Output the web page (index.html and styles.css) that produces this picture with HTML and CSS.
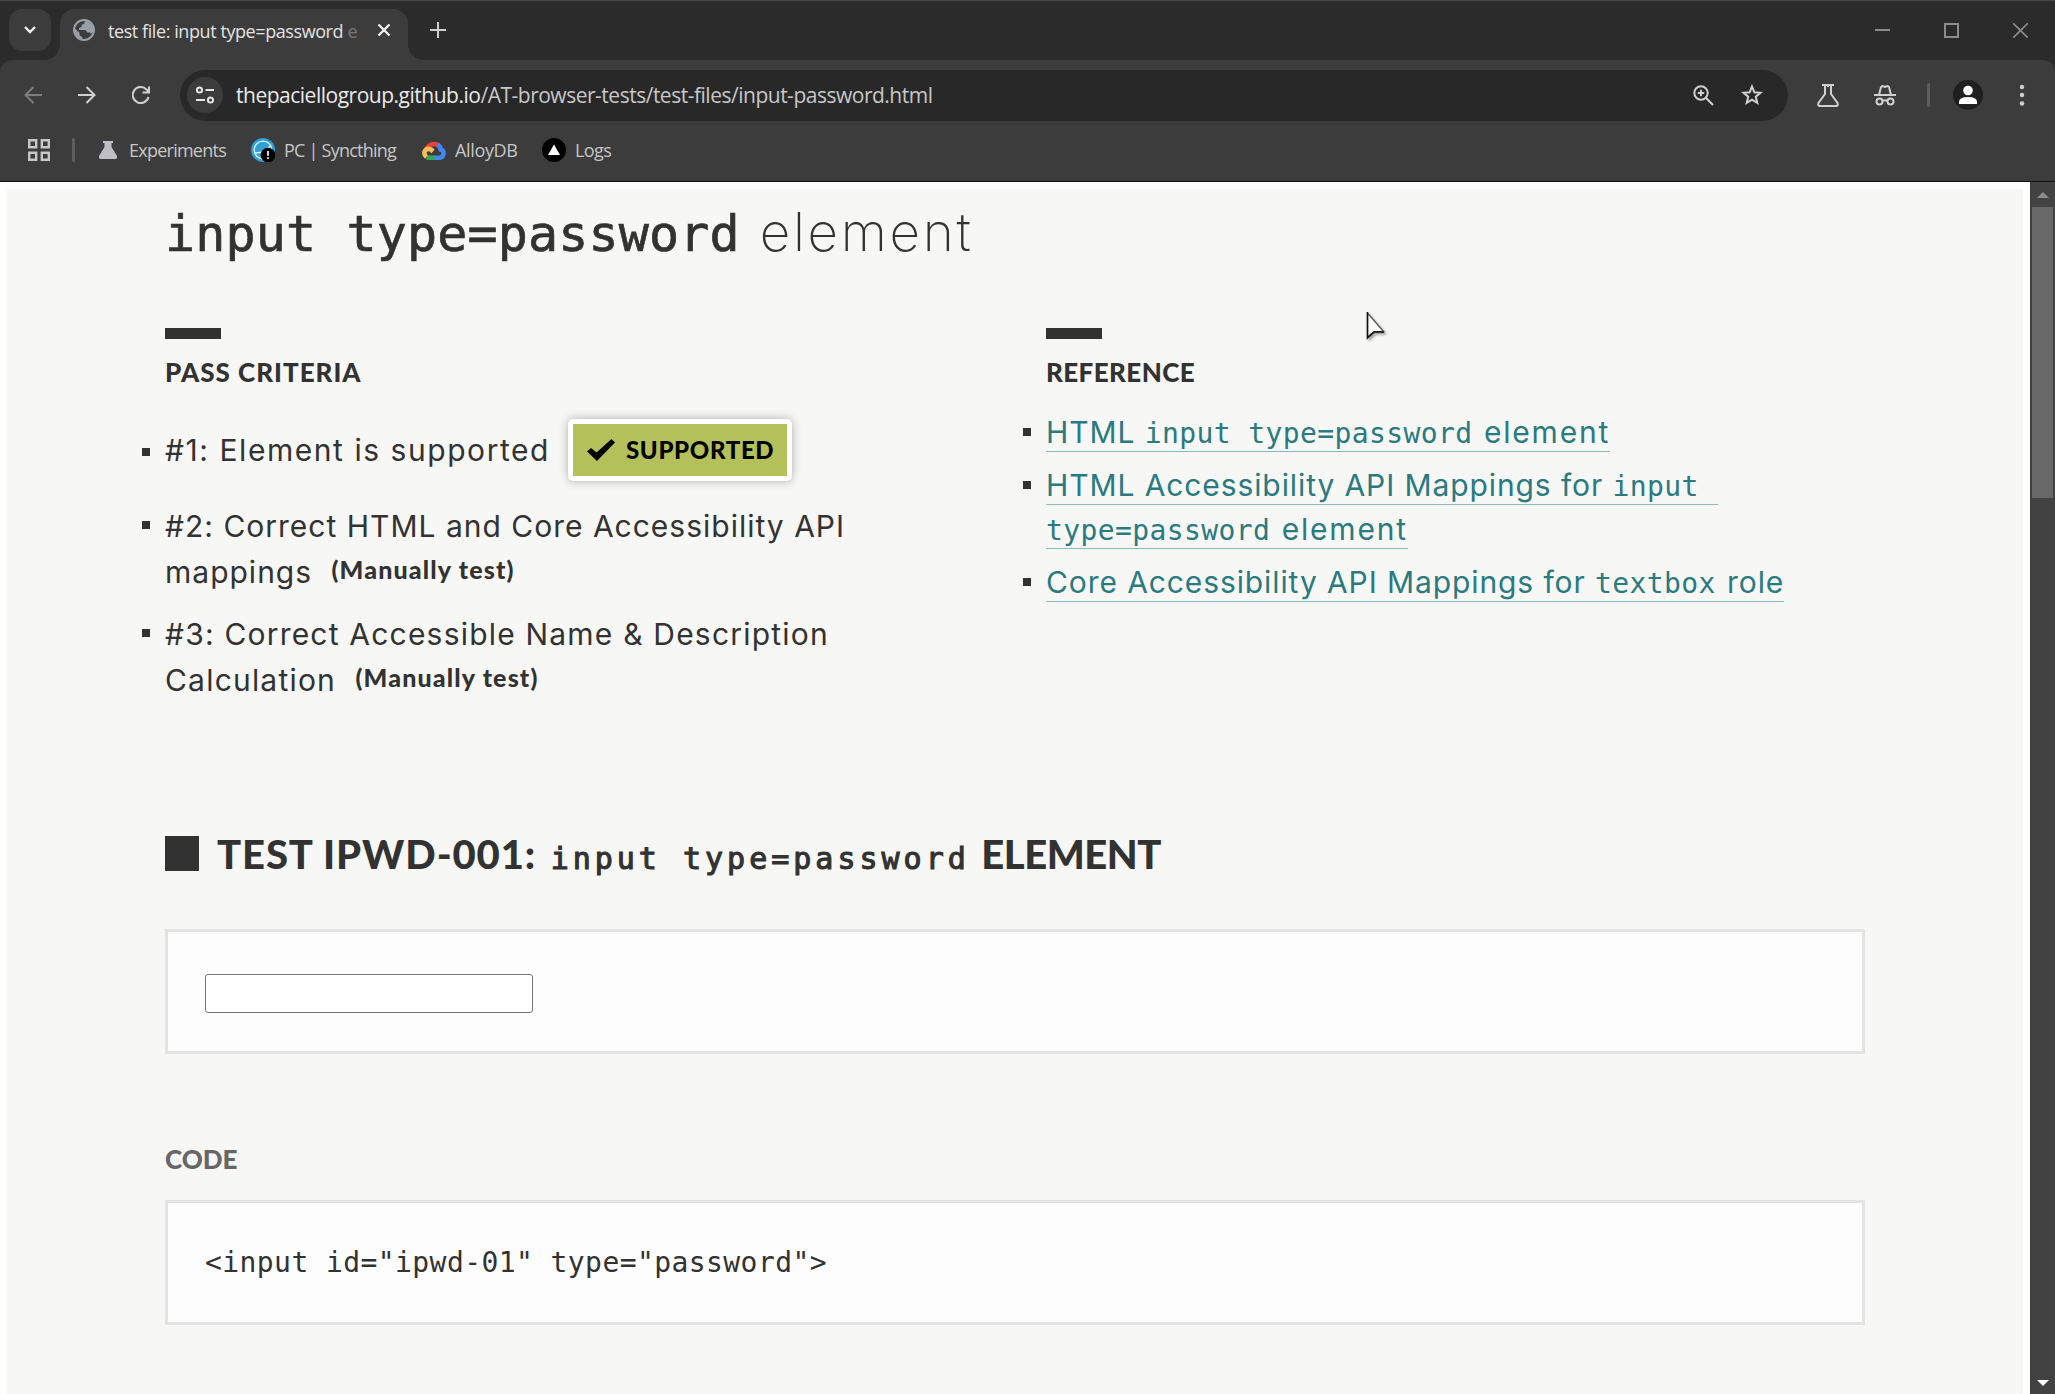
FILE: index.html
```html
<!DOCTYPE html>
<html lang="en">
<head>
    <meta charset="UTF-8">
    <title>test file: input type=password element</title>
    <link rel="stylesheet" href="styles.css">
</head>
<body>
    <header class="browser">
        <div class="tab-strip">
            <button class="tab-search" aria-label="Search tabs">
                <svg width="14" height="10" viewBox="0 0 14 10"><path d="M2 2l5 5 5-5" fill="none" stroke="#f0f0f0" stroke-width="2.4"/></svg>
            </button>
            <div class="tab">
                <svg class="globe" width="22" height="22" viewBox="0 0 22 22">
                    <circle cx="11" cy="11" r="10" fill="#3c3c3c" stroke="#9aa0a6" stroke-width="2"/>
                    <path d="M12 1.5L11.500 4Q11 5.500 9 5.500L8.500 8 6 9v2h6q2 .5 2 2.500h2.500Q18 13.500 18 15l2.500-3Q21 5 12 1.500zM1.500 9L6.500 14v2q.5 1.500 2.500 1.500l.5 3Q2 19 1.500 9z" fill="#9aa0a6"/>
                </svg>
                <span class="tab-title">test file: input type=password <span class="faded">e</span></span>
                <svg class="tab-close" width="14" height="14" viewBox="0 0 14 14"><path d="M1.500 1.500l11 11M12.500 1.500l-11 11" stroke="#f0f0f0" stroke-width="2.300"/></svg>
            </div>
            <svg class="new-tab" width="16" height="16" viewBox="0 0 16 16"><path d="M8 0v16M0 8h16" stroke="#d0d0d0" stroke-width="2"/></svg>
            <div class="window-buttons">
                <svg width="15" height="15" viewBox="0 0 15 15"><path d="M0 7h15" stroke="#8c8c8c" stroke-width="2"/></svg>
                <svg width="15" height="15" viewBox="0 0 15 15"><path d="M1 1h13v13H1z" fill="none" stroke="#8c8c8c" stroke-width="2"/></svg>
                <svg width="15" height="15" viewBox="0 0 15 15"><path d="M0 0l15 15M15 0L0 15" stroke="#8c8c8c" stroke-width="1.600"/></svg>
            </div>
        </div>

        <div class="toolbar">
            <div class="nav-buttons">
                <svg width="18" height="18" viewBox="0 0 18 18" fill="none" stroke="#7d7d7d" stroke-width="2"><path d="M9.500 1L1.500 9l8 8M1.500 9H18"/></svg>
                <svg width="18" height="18" viewBox="0 0 18 18" fill="none" stroke="#d0d0d0" stroke-width="2"><path d="M8.500 1l8 8-8 8M16.500 9H0"/></svg>
                <svg width="18" height="18" viewBox="0 0 18 18"><path d="M16.500 11A8 8 0 1 1 14.500 3.500L17 6M17 .5V6.500H10.500" fill="none" stroke="#d0d0d0" stroke-width="2"/></svg>
            </div>
            <div class="omnibox">
                <span class="site-info">
                    <svg width="18" height="18" viewBox="0 0 18 18" fill="none" stroke="#e6e6e6" stroke-width="2"><circle cx="3.500" cy="4" r="2.600"/><path d="M9.500 4H18M0 14h9"/><circle cx="14.500" cy="14" r="2.600"/></svg>
                </span>
                <span class="url"><span class="url-host">thepaciellogroup.github.io</span>/AT-browser-tests/test-files/input-password.html</span>
                <svg class="icon-zoom" width="21" height="21" viewBox="0 0 21 21" fill="none" stroke="#d0d0d0" stroke-width="2"><circle cx="8" cy="8" r="6.700"/><path d="M13 13l7 7M8 4.800v6.400M4.800 8h6.400"/></svg>
                <svg width="22" height="22" viewBox="0 0 22 22"><path d="M11 2.500l2.300 5.700 6.200.5-4.700 4 1.500 6.200-5.300-3.300-5.300 3.300 1.500-6.200-4.700-4 6.200-.5z" fill="none" stroke="#d0d0d0" stroke-width="2"/></svg>
            </div>
            <div class="toolbar-buttons">
                <svg width="22" height="23" viewBox="0 0 22 23" fill="none" stroke="#d0d0d0" stroke-width="2"><path d="M5 1h12M8 1v9L1.500 19q-1 3 1.500 3h16q2.500 0 1.500-3L14 10V1M11 1v2" /></svg>
                <svg class="icon-incognito" width="22" height="21" viewBox="0 0 22 21" fill="none" stroke="#d0d0d0" stroke-width="2"><path d="M0 10h22M5 10l2-8 1.500-1 2.500 1 2.500-1L15 2l2 8M8.500 16q2.500-1.500 5 0"/><circle cx="5.500" cy="16.500" r="3"/><circle cx="16.500" cy="16.500" r="3"/></svg>
                <span class="divider"></span>
                <svg class="avatar" width="30" height="30" viewBox="0 0 30 30"><circle cx="15" cy="15" r="15" fill="#1f1f1f"/><circle cx="15" cy="10.500" r="4.800" fill="#fff"/><path d="M6 24v-2q0-5 9-5t9 5v2z" fill="#fff"/></svg>
                <svg class="menu" width="6" height="22" viewBox="0 0 6 22" fill="#d0d0d0"><circle cx="3" cy="3" r="2.200"/><circle cx="3" cy="11" r="2.200"/><circle cx="3" cy="19.500" r="2.200"/></svg>
            </div>
        </div>

        <nav class="bookmarks">
            <svg width="22" height="22" viewBox="0 0 22 22" fill="none" stroke="#c7c7c7" stroke-width="2.400"><path d="M1.200 1.200h7v7h-7zM13.800 1.200h7v7h-7zM1.200 13.800h7v7h-7zM13.800 13.800h7v7h-7z"/></svg>
            <span class="divider"></span>
            <a class="bookmark bm-experiments"><svg width="18" height="18" viewBox="0 0 18 18"><path d="M4 0h10v2h-1.500v4L18 15q.5 3-2 3H2q-2.500 0-2-3L5.500 6V2H4z" fill="#bdc1c6"/></svg>Experiments</a>
            <a class="bookmark bm-syncthing">
                <svg width="25" height="24" viewBox="0 0 25 24">
                    <circle cx="12" cy="12" r="12" fill="#2f9fd6"/>
                    <circle cx="12" cy="12" r="8.800" fill="none" stroke="#e4f3fa" stroke-width="1.300"/>
                    <path d="M14 14L20 7M14 14L3 15" stroke="#e4f3fa" stroke-width="1.300"/>
                    <circle cx="17" cy="17" r="7.300" fill="#000"/>
                    <path d="M17 13v4.800M17 19.200v1.800" stroke="#fff" stroke-width="1.700"/>
                </svg>PC | Syncthing</a>
            <a class="bookmark bm-alloy">
                <svg width="24" height="19" viewBox="0 0 24 19" fill="none" stroke-width="4.600">
                    <path d="M4.500 8A8 8 0 0 1 16.500 4.500" stroke="#ea4335"/>
                    <path d="M15.500 3.500Q18.500 5.500 18.700 8.500Q22 9.500 21.500 13Q21 16.500 17.500 16.700H12" stroke="#4285f4"/>
                    <path d="M12.500 16.700H4.500" stroke="#34a853"/>
                    <path d="M4.500 16Q1.500 13.500 2.800 10Q5 6.500 9 8.500L11 10.500" stroke="#fbbc5a"/>
                </svg>AlloyDB</a>
            <a class="bookmark bm-logs"><svg width="24" height="24" viewBox="0 0 24 24"><circle cx="12" cy="12" r="12" fill="#000"/><path d="M12 6.500L18 17H6z" fill="#fff"/></svg>Logs</a>
        </nav>
    </header>

    <div class="viewport">
        <main class="page">
            <h1><code>input type=password</code> <span class="light">element</span></h1>

            <div class="columns">
                <section class="criteria">
                    <h3 class="pass-title">Pass criteria</h3>
                    <ul>
                        <li class="with-badge">
                            <span class="c1">#1: Element is supported</span>
                            <span class="supported">
                                <svg width="28" height="22" viewBox="0 0 28 22"><path d="M0 12.500L4 9 9.500 13.500 24.500 0l3.500 3.500L10 22z"/></svg>Supported
                            </span>
                        </li>
                        <li><div>#2: Correct HTML and Core Accessibility API<br>mappings <span class="manual">(Manually test)</span></div></li>
                        <li><div><span class="c3">#3: Correct Accessible Name &amp; Description</span><br><span class="c3">Calculation</span> <span class="manual">(Manually test)</span></div></li>
                    </ul>
                </section>
                <section class="reference">
                    <h3 class="ref-title">Reference</h3>
                    <ul>
                        <li><div><a href="#">HTML <code>input type=password</code> <span class="el">element</span></a></div></li>
                        <li><div><a href="#">HTML Accessibility API Mappings for <code>input&nbsp;</code><br><code>type=password</code> <span class="el">element</span></a></div></li>
                        <li><div><a href="#">Core Accessibility API Mappings for <code>textbox</code> role</a></div></li>
                    </ul>
                </section>
            </div>

            <h2><span class="square"></span><span class="test-id">Test IPWD-001:</span> <code>input type=password</code> <span class="test-el">element</span></h2>
            <div class="box"><input type="password" id="ipwd-01"></div>

            <h3 class="code-title">Code</h3>
            <div class="box"><code class="source">&lt;input id="ipwd-01" type="password"&gt;</code></div>
        </main>
        <div class="scrollbar">
            <svg width="12" height="6" viewBox="0 0 12 6"><path d="M6 0l6 6H0z" fill="#8c8c8c"/></svg>
            <span class="thumb"></span>
            <svg class="down" width="12" height="6" viewBox="0 0 12 6"><path d="M0 0h12L6 6z" fill="#fff"/></svg>
        </div>
    </div>

    <svg class="cursor" width="24" height="32" viewBox="0 0 24 32"><path d="M1.500 1v24l6.500-5.500H17.500z" fill="#fff" stroke="#555" stroke-width="1.200"/><path d="M1.500 0v26l6.500-6H18" fill="none" stroke="#111" stroke-width="1.600"/></svg>
</body>
</html>
```
FILE: styles.css
```css
* {
    box-sizing: border-box;
}
body {
    margin: 0;
    height: 1394px;
    overflow: hidden;
    display: flex;
    flex-direction: column;
    position: relative;
    font-family: Inter, sans-serif;
    color: #323232;
    background-color: #fff;
}
svg {
    display: block;
    flex: none;
}

/* browser chrome */
.browser {
    height: 182px;
    flex: none;
    background-color: #2b2b2b;
    border-bottom: 1px solid #111;
    font-family: "Open Sans", sans-serif;
    white-space: nowrap;
}
.tab-strip {
    height: 60px;
    display: flex;
    align-items: flex-start;
    border-top: 1px solid #454545;
}
.tab-search {
    width: 42px;
    height: 42px;
    margin: 8px 9px 0;
    padding: 0;
    border: none;
    border-radius: 13px;
    background-color: #3c3c3c;
    display: flex;
    align-items: center;
    justify-content: center;
}
.tab {
    width: 348px;
    height: 51px;
    margin-top: 8px;
    padding: 0 17px 9px 13px;
    border-radius: 15px 15px 0 0;
    background-color: #3c3c3c;
    display: flex;
    align-items: center;
    position: relative;
}
.tab::before, .tab::after {
    content: "";
    position: absolute;
    bottom: 0;
    width: 15px;
    height: 15px;
}
.tab::before {
    left: -15px;
    background: radial-gradient(circle at 0 0, transparent 14.5px, #3c3c3c 15px);
}
.tab::after {
    right: -15px;
    background: radial-gradient(circle at 100% 0, transparent 14.5px, #3c3c3c 15px);
}
.tab-title {
    margin: 2px 0 0 13px;
    font-size: 18px;
    letter-spacing: -0.42px;
    color: #e3e3e3;
}
.faded {
    color: #777;
}
.tab-close {
    margin-left: auto;
}
.new-tab {
    margin: 21px 0 0 22px;
}
.window-buttons {
    display: flex;
    gap: 54px;
    margin: 22px 27px 0 auto;
}
.toolbar {
    height: 68px;
    display: flex;
    align-items: center;
    padding: 2px 30px 0 24px;
    background-color: #3c3c3c;
    border-radius: 12px 12px 0 0;
}
.nav-buttons {
    display: flex;
    gap: 36px;
}
.omnibox {
    width: 1608px;
    height: 51px;
    margin-left: 30px;
    padding: 0 25px 0 7px;
    border-radius: 26px;
    background-color: #282828;
    display: flex;
    align-items: center;
}
.site-info {
    width: 36px;
    height: 36px;
    border-radius: 50%;
    background-color: #3c3c3c;
    display: flex;
    align-items: center;
    justify-content: center;
}
.url {
    margin-left: 13px;
    font-size: 21px;
    letter-spacing: -0.49px;
    color: #c7c7c7;
}
.url-host {
    color: #e8e8e8;
}
.icon-zoom {
    margin: 0 27px 0 auto;
}
.toolbar-buttons {
    flex: 1;
    display: flex;
    align-items: center;
    padding-left: 29px;
}
.icon-incognito {
    margin: 0 31px 0 35px;
}
.divider {
    width: 3px;
    height: 24px;
    border-radius: 2px;
    background-color: #5e5e5e;
}
.avatar {
    margin-left: 23px;
}
.menu {
    margin-left: auto;
}
.bookmarks {
    height: 53px;
    padding: 0 0 9px 28px;
    background-color: #3c3c3c;
    display: flex;
    align-items: center;
}
.bookmarks .divider {
    margin: 0 24px 0 22px;
}
.bookmark {
    display: flex;
    align-items: center;
    gap: 12px;
    font-size: 18px;
    line-height: 24px;
    color: #c7c7c7;
}
.bm-experiments {
    width: 152px;
    letter-spacing: -0.75px;
}
.bm-syncthing {
    width: 171px;
    gap: 8px;
    letter-spacing: -0.77px;
}
.bm-alloy {
    width: 120px;
    gap: 9px;
    letter-spacing: -0.35px;
}
.bm-logs {
    gap: 9px;
    letter-spacing: -0.6px;
}

/* test page */
.viewport {
    flex: 1;
    display: flex;
}
.page {
    width: 2016px;
    margin: 7px 7px 0;
    padding: 13px 158px 0;
    background-color: #f7f7f5;
}
code {
    font-family: "DejaVu Sans Mono", monospace;
    line-height: 1;
}
h1, h2, h3, ul {
    margin: 0;
    padding: 0;
}
h1 {
    font-size: 53px;
    line-height: 60px;
    font-weight: 200;
    white-space: nowrap;
}
h1 code {
    margin-right: 5px;
    font-size: 50px;
    font-weight: 400;
    letter-spacing: 0.15px;
    -webkit-text-stroke: 0.7px #323232;
}
.light {
    letter-spacing: 2.7px;
}
h2, h3, .supported, .manual {
    font-family: Lato, sans-serif;
    font-weight: 900;
}
h2, h3, .supported {
    text-transform: uppercase;
}
h3 {
    font-size: 26px;
    line-height: 30px;
}
.columns {
    display: grid;
    grid-template-columns: 881px 1fr;
    height: 501px;
    margin-top: 66px;
}
.columns h3::before {
    content: "";
    display: block;
    width: 56px;
    height: 11px;
    margin-bottom: 18px;
    background-color: #323232;
}
.pass-title {
    letter-spacing: 1px;
}
.ref-title {
    letter-spacing: 0.4px;
}
ul {
    list-style: none;
    font-size: 30px;
    line-height: 46px;
}
li {
    display: flex;
    margin: 0 0 16px -23px;
    letter-spacing: 1px;
    white-space: nowrap;
}
li::before {
    content: "";
    width: 8px;
    height: 8px;
    margin: 18px 15px 0 0;
    background-color: #323232;
}
.criteria ul {
    margin-top: 32px;
}
.with-badge {
    height: 62px;
    margin-bottom: 22px;
    align-items: center;
}
.with-badge::before {
    margin-top: 4px;
}
.c1 {
    letter-spacing: 1.55px;
}
.c3 {
    letter-spacing: 1.2px;
}
.supported {
    width: 224px;
    height: 62px;
    margin-left: 18px;
    padding-left: 14px;
    border: 5px solid #fff;
    border-radius: 5px;
    background-color: #b4c05a;
    box-shadow: 0 0 10px rgba(0, 0, 0, 0.3);
    display: flex;
    align-items: center;
    gap: 11px;
    font-size: 24px;
    letter-spacing: 0.65px;
    color: #000;
}
.manual {
    margin-left: 10px;
    font-size: 25px;
    letter-spacing: 1.15px;
    line-height: 1;
    vertical-align: 4px;
}
.reference ul {
    margin-top: 23px;
    line-height: 44px;
}
.reference li {
    margin-bottom: 9px;
    letter-spacing: 0.9px;
}
.reference a {
    padding-bottom: 1px;
    border-bottom: 1px solid #8cb9b9;
    color: #2a7a80;
    text-decoration: none;
}
.reference code {
    margin-right: 2px;
    font-size: 28px;
    letter-spacing: 0.4px;
}
.reference .el {
    letter-spacing: 1.8px;
}
h2 {
    font-size: 40px;
    line-height: 50px;
    white-space: nowrap;
}
.square {
    display: inline-block;
    width: 34px;
    height: 35px;
    margin-right: 18px;
    vertical-align: -2px;
    background-color: #323232;
}
.test-id {
    letter-spacing: 0.9px;
}
.test-el {
    margin-left: 2px;
    letter-spacing: -0.45px;
}
h2 code {
    margin-left: 5px;
    font-size: 30px;
    font-weight: 400;
    letter-spacing: 4px;
    text-transform: none;
    -webkit-text-stroke: 1.1px #323232;
}
.box {
    height: 125px;
    margin-top: 50px;
    padding: 42px 37px;
    border: 3px solid #e2e3e2;
    background-color: #fdfdfd;
}
.box input {
    display: block;
    width: 328px;
    height: 39px;
    border: 1px solid #767676;
    border-radius: 3px;
    background-color: #fff;
}
.code-title {
    margin-top: 90px;
    color: #666;
}
.code-title + .box {
    margin-top: 26px;
}
.source {
    display: block;
    font-size: 28px;
    line-height: 35px;
    letter-spacing: 0.42px;
}
.scrollbar {
    width: 25px;
    padding: 10px 0 8px;
    background-color: #424242;
    display: flex;
    flex-direction: column;
    align-items: center;
}
.thumb {
    width: 21px;
    height: 291px;
    margin-top: 9px;
    background-color: #686868;
}
.down {
    margin-top: auto;
}
.cursor {
    position: absolute;
    left: 1366px;
    top: 312px;
    filter: drop-shadow(2px 2px 1px rgba(0, 0, 0, 0.35));
}
```
